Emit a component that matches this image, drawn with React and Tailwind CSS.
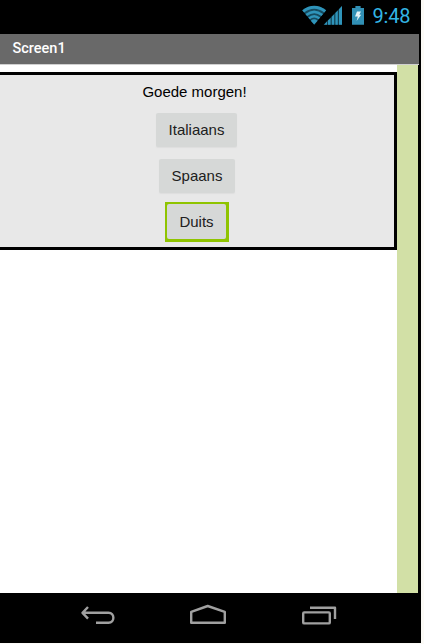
function StatusIcons() {
  return (
    <svg width="64" height="24" viewBox="302 4 64 24" className="shrink-0" fill="none" stroke="#2f94ba">
      <path d="M302.2 10.2Q314.2 2 326.2 10.2L314.2 24.8Z" fill="#154a5f" stroke="none" />
      <path d="M303.2 11.4Q314.2 3.2 325.2 11.4" strokeWidth="3" />
      <path d="M306.2 15Q314.2 8.6 322.2 15" strokeWidth="2.6" />
      <path d="M309 18.4Q314.2 14 319.4 18.4" strokeWidth="2.4" />
      <path d="M310.8 20.7Q314.2 18 317.6 20.7L314.2 24.6Z" fill="#2f94ba" stroke="none" />
      <path d="M323.5 24.8L342 6V24.8Z" fill="#123f50" stroke="none" />
      <path d="M324 24.8L327 21.6V24.8ZM328 20.6L330.6 18V24.8H328ZM331.8 16.8L334.2 14.2V24.8H331.8ZM335.4 13L337.8 10.4V24.8H335.4ZM339 9.2L342 6V24.8H339Z" fill="#2f94ba" stroke="none" />
      <path d="M355.4 6H360.6V8H364V24.8H352V8H355.4Z" fill="#3190b5" stroke="none" />
      <path d="M357 11.5H361L359.3 14.8H361.2L356.6 21L357.8 16.6H355Z" fill="#e4f2f7" stroke="none" />
    </svg>
  );
}

function NavIcons() {
  return (
    <svg width="421" height="50" viewBox="0 593 421 50" fill="none" stroke="#a0a0a0" strokeWidth="2.4" strokeLinejoin="round" className="block">
      <path d="M88 607L82.5 612.8L88 618.6M83 612.8H108.5C115 612.8 115 622.8 108.5 622.8H96" />
      <path d="M191.2 622.8V611.8L207.7 606L224.8 611.8V622.8Z" />
      <rect x="303.2" y="612.4" width="26.6" height="11" rx="1" />
      <path d="M310 607.8H335V619" />
    </svg>
  );
}

function LanguageButton({ label, className }) {
  return (
    <button className={`flex items-center justify-center rounded-[2px] bg-[#d6d8d7] text-[#202020] ${className}`}>
      {label}
    </button>
  );
}

export default function App() {
  return (
    <div className="h-[644px] w-[424px] overflow-hidden bg-[#fbfaf6]">
      <div className="flex h-[643px] w-[421px] flex-col bg-black">
        <div className="flex h-[34px] shrink-0 pl-[302px] pt-1">
          <StatusIcons />
          <span className="ml-[6.5px] mt-px font-['Roboto'] text-[20px] leading-[23px] tracking-[-0.2px] text-[#33b5e5]">9:48</span>
        </div>
        <div className="flex h-[31px] w-[419px] shrink-0 items-center border-b border-[#d0d0d0] bg-[#696969] pb-px pl-[12.5px] font-['Roboto'] text-[14.5px] font-medium text-white">
          Screen1
        </div>
        <div className="flex h-[528px] w-[418px] shrink-0">
          <main className="w-[397px] bg-white pt-[7px] font-['Liberation_Sans',sans-serif] text-[15px]">
            <section className="flex h-[178px] flex-col items-center border-y-[3px] border-r-[3px] border-black bg-[#e8e8e8]">
              <p className="mt-[7px] h-[31px] pr-[5px] leading-[20px] text-black">Goede morgen!</p>
              <LanguageButton label="Italiaans" className="mr-px h-[34px] w-[81px] shadow-[0_1px_1px_#dedede]" />
              <LanguageButton label="Spaans" className="mt-3 h-[34px] w-[76px] shadow-[0_1px_1px_#dedede]" />
              <div className="mt-[9px] h-10 w-16 border-b-[3px] border-l-2 border-r-[3px] border-t-2 border-[#8fc400] bg-[#8fc400]">
                <LanguageButton label="Duits" className="h-[35px] w-full pt-px" />
              </div>
            </section>
          </main>
          <aside className="w-[21px] bg-[#d2e0a6]" />
        </div>
        <nav className="h-[50px] shrink-0">
          <NavIcons />
        </nav>
      </div>
    </div>
  );
}
